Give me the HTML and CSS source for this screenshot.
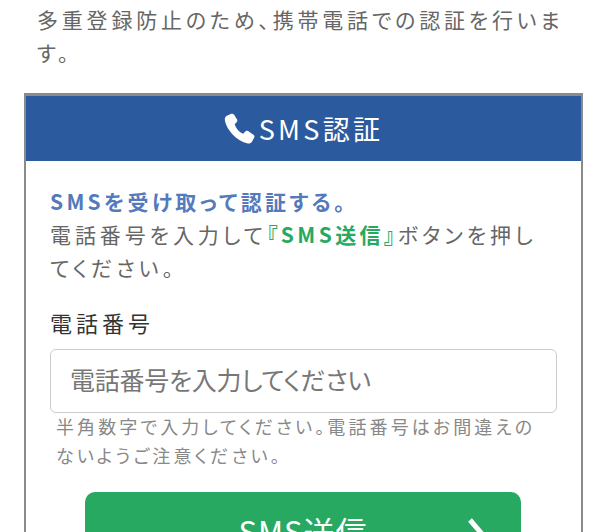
FILE: index.html
```html
<!DOCTYPE html>
<html lang="ja">
<head>
    <meta charset="UTF-8">
    <title>SMS認証</title>
    <link rel="stylesheet" href="styles.css">
</head>
<body>
    <div class="page">
        <p class="lead">多重登録防止のため、携帯電話での認証を行います。</p>
        <section class="card">
            <h2 class="card__title">
                <svg class="card__icon" viewBox="0 0 32 32" aria-hidden="true">
                    <path d="M7.5 .8 L3 2.8 C1.2 3.8 .5 5.4 .9 7.6 C2.6 17.6 13.4 29.4 24.4 31.4 C26.4 31.7 27.9 31.1 28.9 29.6 L31.2 25.4 C31.8 24.2 31.4 23 30.4 22.4 L24.8 18.6 C23.8 18 22.7 18.2 21.9 19.1 L19.8 21.5 C15.4 19.6 12.4 15.8 11 11.6 L13 9.6 C13.8 8.7 14 7.6 13.5 6.6 L10.6 2 C9.8 .8 8.7 .4 7.5 .8 Z"/>
                </svg>
                <span>SMS認証</span>
            </h2>
            <div class="card__body">
                <p class="intro">
                    <strong class="intro__head">SMSを受け取って認証する。</strong><br>
                    電話番号を入力して<strong class="intro__key">『SMS送信』</strong>ボタンを押してください。
                </p>
                <label class="field__label" for="tel">電話番号</label>
                <input class="field__input" id="tel" type="tel" placeholder="電話番号を入力してください">
                <p class="field__note">半角数字で入力してください。電話番号はお間違えのないようご注意ください。</p>
                <button class="send" type="button">
                    <span>SMS送信</span>
                    <svg class="send__arrow" viewBox="0 0 24 48" aria-hidden="true">
                        <path d="M3 3 L21 24 L3 45"/>
                    </svg>
                </button>
            </div>
        </section>
    </div>
</body>
</html>
```

FILE: styles.css
```css
* {
    margin: 0;
    padding: 0;
    box-sizing: border-box;
}

html, body {
    height: 532px;
    overflow: hidden;
}

body {
    background: #fff;
    color: #666;
    font-family: "Noto Sans CJK JP", "Noto Sans", sans-serif;
    font-feature-settings: "palt";
}

.page {
    padding: 3px 17px 0 24px;
}

.lead {
    padding: 0 13px;
    font-size: 21px;
    line-height: 33px;
    letter-spacing: 3.8px;
}

.card {
    margin-top: 24px;
    border: 2px solid #8a8a8a;
    border-top-width: 3px;
    border-bottom: 0;
}

.card__title {
    display: flex;
    justify-content: center;
    align-items: center;
    gap: 4px;
    height: 65px;
    background: #2c5a9e;
    color: #fff;
    font-size: 27px;
    font-weight: 400;
    letter-spacing: 3.3px;
}

.card__icon {
    width: 31px;
    height: 31px;
    fill: #fff;
}

.card__body {
    padding: 24px 24px 0;
}

.intro {
    padding-right: 20px;
    font-size: 21px;
    line-height: 33px;
    letter-spacing: 3.9px;
}

.intro__head {
    color: #5579bb;
    font-weight: 700;
    letter-spacing: 3.3px;
}

.intro__key {
    color: #27a961;
    font-weight: 700;
    letter-spacing: 3.4px;
}

.field__label {
    display: block;
    margin-top: 22px;
    color: #333;
    font-size: 22px;
    line-height: 33px;
    letter-spacing: 4px;
}

.field__input {
    display: block;
    width: 100%;
    height: 64px;
    margin-top: 10px;
    padding: 0 19px 4px;
    border: 1px solid #ccc;
    border-radius: 6px;
    font: inherit;
    font-size: 25px;
    letter-spacing: -0.25px;
}

.field__input::placeholder {
    color: #777;
    opacity: 1;
}

.field__note {
    margin-top: -1px;
    padding: 0 18px 0 6px;
    color: #888;
    font-size: 18px;
    line-height: 29px;
    letter-spacing: 3.1px;
}

.send {
    position: relative;
    display: block;
    width: 436px;
    height: 76px;
    margin: 22px 0 0 35px;
    border: 0;
    border-radius: 10px;
    background: #27a961;
    color: #fff;
    font: inherit;
    font-size: 31px;
    letter-spacing: 1px;
}

.send__arrow {
    position: absolute;
    top: 25px;
    right: 30px;
    width: 24px;
    height: 48px;
    fill: none;
    stroke: #fff;
    stroke-width: 5;
}
```
